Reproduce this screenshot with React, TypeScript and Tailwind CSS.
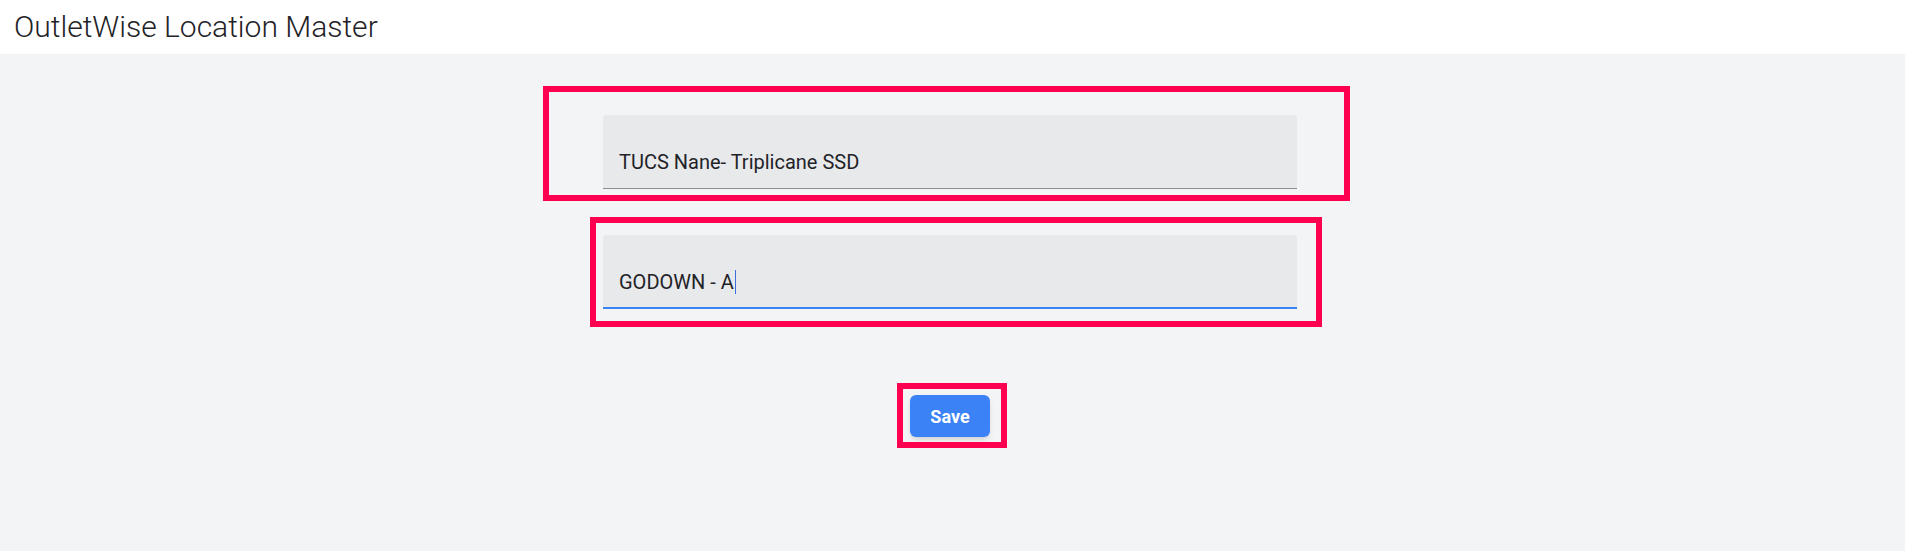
import React from "react";

const fields = [
  {
    value: "TUCS Nane- Triplicane SSD",
    focused: false,
    // annotation frame, offsets from the field edges
    frame: "-left-[60px] -right-[53px] -top-[29px] -bottom-[12px]",
  },
  {
    value: "GODOWN - A",
    focused: true,
    frame: "-left-[13px] -right-[25px] -top-[18px] -bottom-[18px]",
  },
];

function Field({
  value,
  focused,
  frame,
}: {
  value: string;
  focused: boolean;
  frame: string;
}) {
  return (
    <div className="relative w-[694px]">
      <div
        className={
          "h-[74px] rounded-t bg-[#e8e9eb] px-[16px] pt-[35px] " +
          (focused
            ? "border-b-2 border-[#3b82f6]"
            : "border-b border-[#8b8d91]")
        }
      >
        <div className="flex items-center text-[20px] leading-[24px] text-[#1f2328]">
          <span>{value}</span>
          {focused && <span className="ml-px h-[24px] w-px bg-[#3b6fe0]" />}
        </div>
      </div>
      <div className={"pointer-events-none absolute border-[6px] border-[#ff0050] " + frame} />
    </div>
  );
}

export default function App() {
  return (
    <div
      className="min-h-[551px] bg-[#f3f4f6]"
      style={{ fontFamily: "Roboto, 'Liberation Sans', sans-serif" }}
    >
      <header className="flex h-[54px] items-center bg-white px-[14px]">
        <h1 className="text-[30px] font-light leading-none text-[#1f2328]">
          OutletWise Location Master
        </h1>
      </header>

      <main className="flex flex-col items-center pr-[5px] pt-[61px]">
        <div className="flex flex-col gap-[46px]">
          {fields.map((f) => (
            <Field key={f.value} {...f} />
          ))}
        </div>

        <div className="relative mt-[86px]">
          <button className="h-[42px] w-[80px] rounded-md bg-[#3b82f6] text-[18px] font-bold text-white shadow-md">
            Save
          </button>
          <div className="pointer-events-none absolute -left-[13px] -right-[17px] -top-[12px] -bottom-[11px] border-[6px] border-[#ff0050]" />
        </div>
      </main>
    </div>
  );
}
